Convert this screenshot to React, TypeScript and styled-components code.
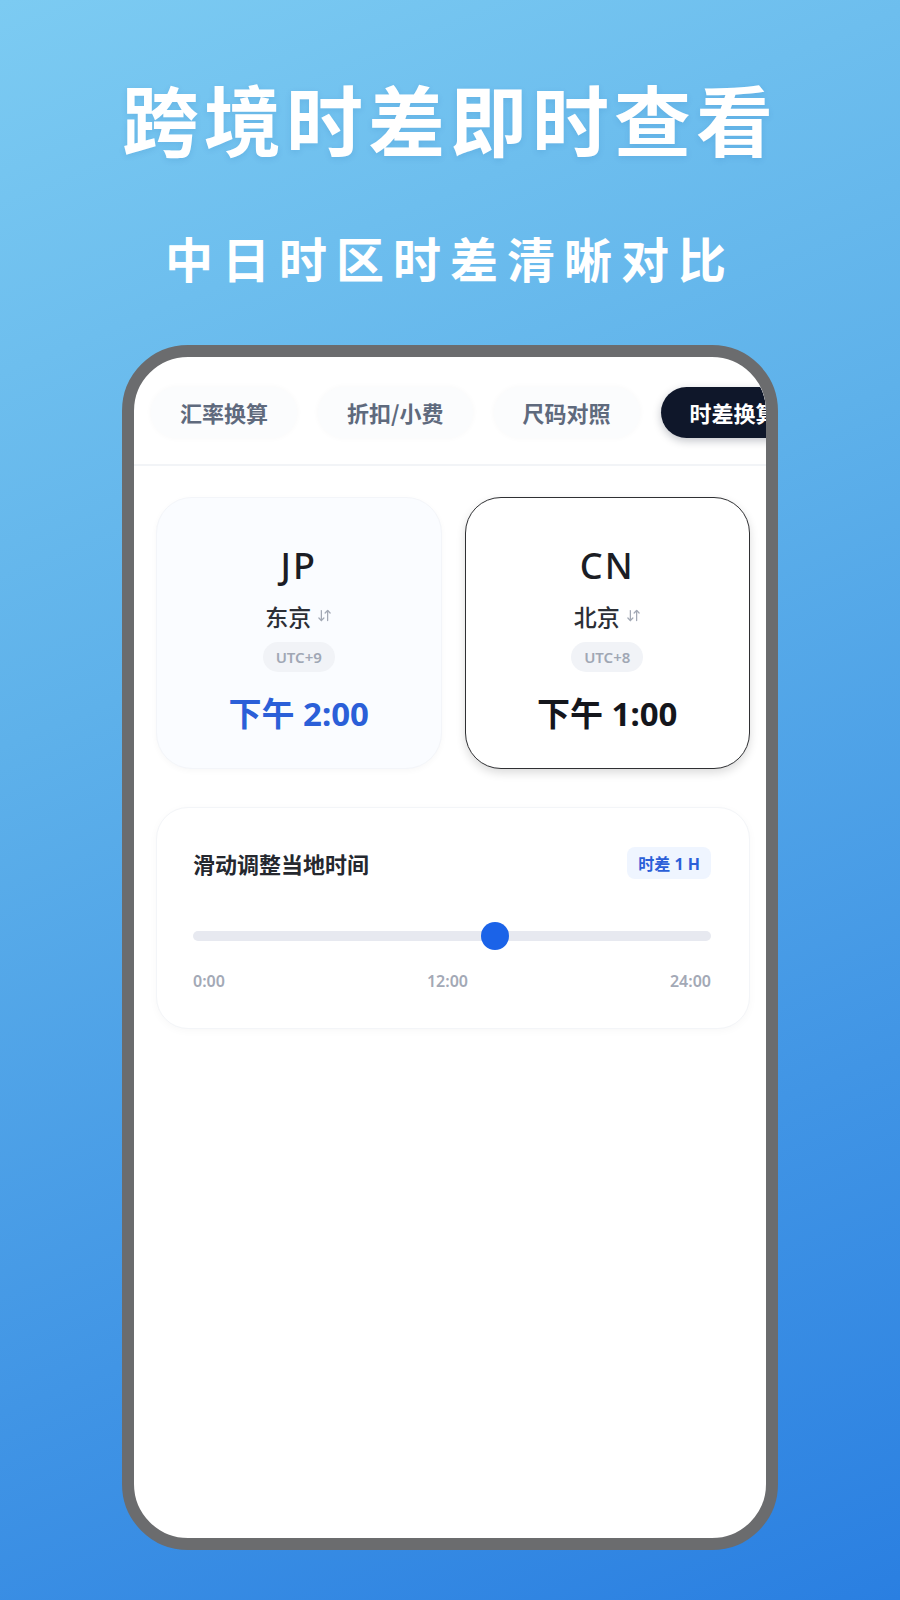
import styled, { createGlobalStyle } from 'styled-components';
import { ArrowDownUp } from 'lucide-react';

const GlobalStyle = createGlobalStyle`
  html, body {
    margin: 0;
    padding: 0;
  }
  body {
    font-family: "Noto Sans", "Noto Sans CJK SC", sans-serif;
  }
`;

const tabs = ['汇率换算', '折扣/小费', '尺码对照', '时差换算'];

const zones = [
  { code: 'JP', city: '东京', utc: 'UTC+9', time: '下午 2:00', selected: false },
  { code: 'CN', city: '北京', utc: 'UTC+8', time: '下午 1:00', selected: true },
];

const sliderHour = 14;

const App = () => {
  return (
    <Page>
      <GlobalStyle />
      <Title>跨境时差即时查看</Title>
      <Subtitle>中日时区时差清晰对比</Subtitle>

      <Phone>
        <Screen>
          <TabRow>
            {tabs.map((t) => (
              <Tab key={t} $active={t === '时差换算'}>{t}</Tab>
            ))}
          </TabRow>

          <Body>
            <ZoneRow>
              {zones.map((z) => (
                <ZoneCard key={z.code} $selected={z.selected}>
                  <Code>{z.code}</Code>
                  <City>
                    {z.city}
                    <ArrowDownUp size={15} strokeWidth={2} color="#a3a9b5" />
                  </City>
                  <Utc>{z.utc}</Utc>
                  <Time $selected={z.selected}>{z.time}</Time>
                </ZoneCard>
              ))}
            </ZoneRow>

            <SliderCard>
              <SliderHeader>
                <SliderTitle>滑动调整当地时间</SliderTitle>
                <DiffBadge>时差 1 H</DiffBadge>
              </SliderHeader>
              <TrackArea>
                <Track />
                <Thumb style={{ left: `${(sliderHour / 24) * 100}%` }} />
              </TrackArea>
              <Scale>
                <span>0:00</span>
                <span>12:00</span>
                <span>24:00</span>
              </Scale>
            </SliderCard>
          </Body>
        </Screen>
      </Phone>
    </Page>
  );
};

export default App;

const Page = styled.div`
  width: 900px;
  height: 1600px;
  box-sizing: border-box;
  padding-top: 72px;
  display: flex;
  flex-direction: column;
  align-items: center;
  overflow: hidden;
  background: linear-gradient(158deg, #7ccbf2 0%, #5eb1ea 38%, #4195e5 72%, #2a7fe1 100%);
`;

const Title = styled.h1`
  margin: 0;
  font-family: "Noto Sans CJK SC", sans-serif;
  font-size: 77px;
  line-height: 1.2;
  font-weight: 700;
  letter-spacing: 5px;
  color: #ffffff;
  text-shadow: 0 2px 6px rgba(20, 80, 160, 0.12);
`;

const Subtitle = styled.h2`
  margin: 65px 0 0;
  font-family: "Noto Sans CJK SC", sans-serif;
  font-size: 48px;
  line-height: 1.2;
  font-weight: 700;
  letter-spacing: 9px;
  color: #ffffff;
`;

const Phone = styled.div`
  margin-top: 58px;
  width: 656px;
  height: 1205px;
  box-sizing: border-box;
  border: 12px solid #6b6c6e;
  border-radius: 66px;
  background: #ffffff;
  overflow: hidden;
`;

const Screen = styled.div`
  display: flex;
  flex-direction: column;
  height: 100%;
  border-radius: 54px;
  overflow: hidden;
`;

const TabRow = styled.div`
  display: flex;
  gap: 21px;
  padding: 30px 0 26px 17px;
  border-bottom: 2px solid #f2f4f7;
  overflow: hidden;
`;

const Tab = styled.div<{ $active?: boolean }>`
  flex-shrink: 0;
  height: 51px;
  padding: 0 29px;
  display: flex;
  align-items: center;
  border-radius: 26px;
  white-space: nowrap;
  font-family: "Noto Sans CJK SC", sans-serif;
  font-size: 22px;
  font-weight: 700;
  color: ${(p) => (p.$active ? '#ffffff' : '#5f6a7d')};
  background: ${(p) => (p.$active ? '#0f172a' : '#fbfcfd')};
  box-shadow: ${(p) => (p.$active ? '0 3px 8px rgba(15, 23, 42, 0.25)' : '0 0 6px rgba(15, 23, 42, 0.03)')};
`;

const Body = styled.div`
  display: flex;
  flex-direction: column;
  gap: 38px;
  padding: 31px 16px 0 22px;
`;

const ZoneRow = styled.div`
  display: grid;
  grid-template-columns: 1fr 1fr;
  gap: 23px;
`;

const ZoneCard = styled.div<{ $selected?: boolean }>`
  height: 272px;
  box-sizing: border-box;
  padding-top: 46px;
  display: flex;
  flex-direction: column;
  align-items: center;
  border-radius: 36px;
  background: ${(p) => (p.$selected ? '#ffffff' : '#fafcff')};
  border: ${(p) => (p.$selected ? '1.5px solid #2f3033' : '1px solid #f3f5f9')};
  box-shadow: ${(p) => (p.$selected ? '0 4px 10px rgba(0, 0, 0, 0.14)' : '0 2px 6px rgba(15, 23, 42, 0.03)')};
`;

const Code = styled.div`
  font-size: 36px;
  line-height: 43px;
  font-weight: 500;
  letter-spacing: 2px;
  color: #1b1d24;
`;

const City = styled.div`
  margin-top: 14px;
  display: flex;
  align-items: center;
  gap: 6px;
  font-family: "Noto Sans CJK SC", sans-serif;
  font-size: 23px;
  line-height: 30px;
  font-weight: 500;
  color: #2c2f36;
`;

const Utc = styled.div`
  margin-top: 11px;
  height: 30px;
  padding: 0 13px;
  display: flex;
  align-items: center;
  border-radius: 15px;
  background: #f1f3f7;
  font-size: 15px;
  font-weight: 600;
  color: #a0a7b4;
`;

const Time = styled.div<{ $selected?: boolean }>`
  margin-top: 22px;
  font-family: "Noto Sans", "Noto Sans CJK SC", sans-serif;
  font-size: 33px;
  line-height: 40px;
  font-weight: 700;
  color: ${(p) => (p.$selected ? '#14161c' : '#2b5fd8')};
`;

const SliderCard = styled.div`
  box-sizing: border-box;
  padding: 39px 38px 37px 36px;
  border-radius: 32px;
  background: #ffffff;
  border: 1px solid #f3f5f8;
  box-shadow: 0 2px 8px rgba(15, 23, 42, 0.03);
`;

const SliderHeader = styled.div`
  display: flex;
  align-items: center;
  justify-content: space-between;
`;

const SliderTitle = styled.div`
  font-family: "Noto Sans CJK SC", sans-serif;
  font-size: 22px;
  font-weight: 700;
  color: #25282f;
`;

const DiffBadge = styled.div`
  height: 32px;
  padding: 0 11px;
  display: flex;
  align-items: center;
  border-radius: 8px;
  background: #eff5ff;
  font-family: "Noto Sans", "Noto Sans CJK SC", sans-serif;
  font-size: 16px;
  font-weight: 700;
  color: #2b5fd8;
`;

const TrackArea = styled.div`
  position: relative;
  margin-top: 43px;
  height: 28px;
  display: flex;
  align-items: center;
`;

const Track = styled.div`
  width: 100%;
  height: 10px;
  border-radius: 5px;
  background: #e7e9f0;
`;

const Thumb = styled.div`
  position: absolute;
  top: 0;
  width: 28px;
  height: 28px;
  margin-left: -14px;
  border-radius: 50%;
  background: #1b63e8;
`;

const Scale = styled.div`
  margin-top: 21px;
  display: flex;
  justify-content: space-between;
  font-size: 16px;
  line-height: 20px;
  font-weight: 600;
  color: #a3a9b6;
`;
